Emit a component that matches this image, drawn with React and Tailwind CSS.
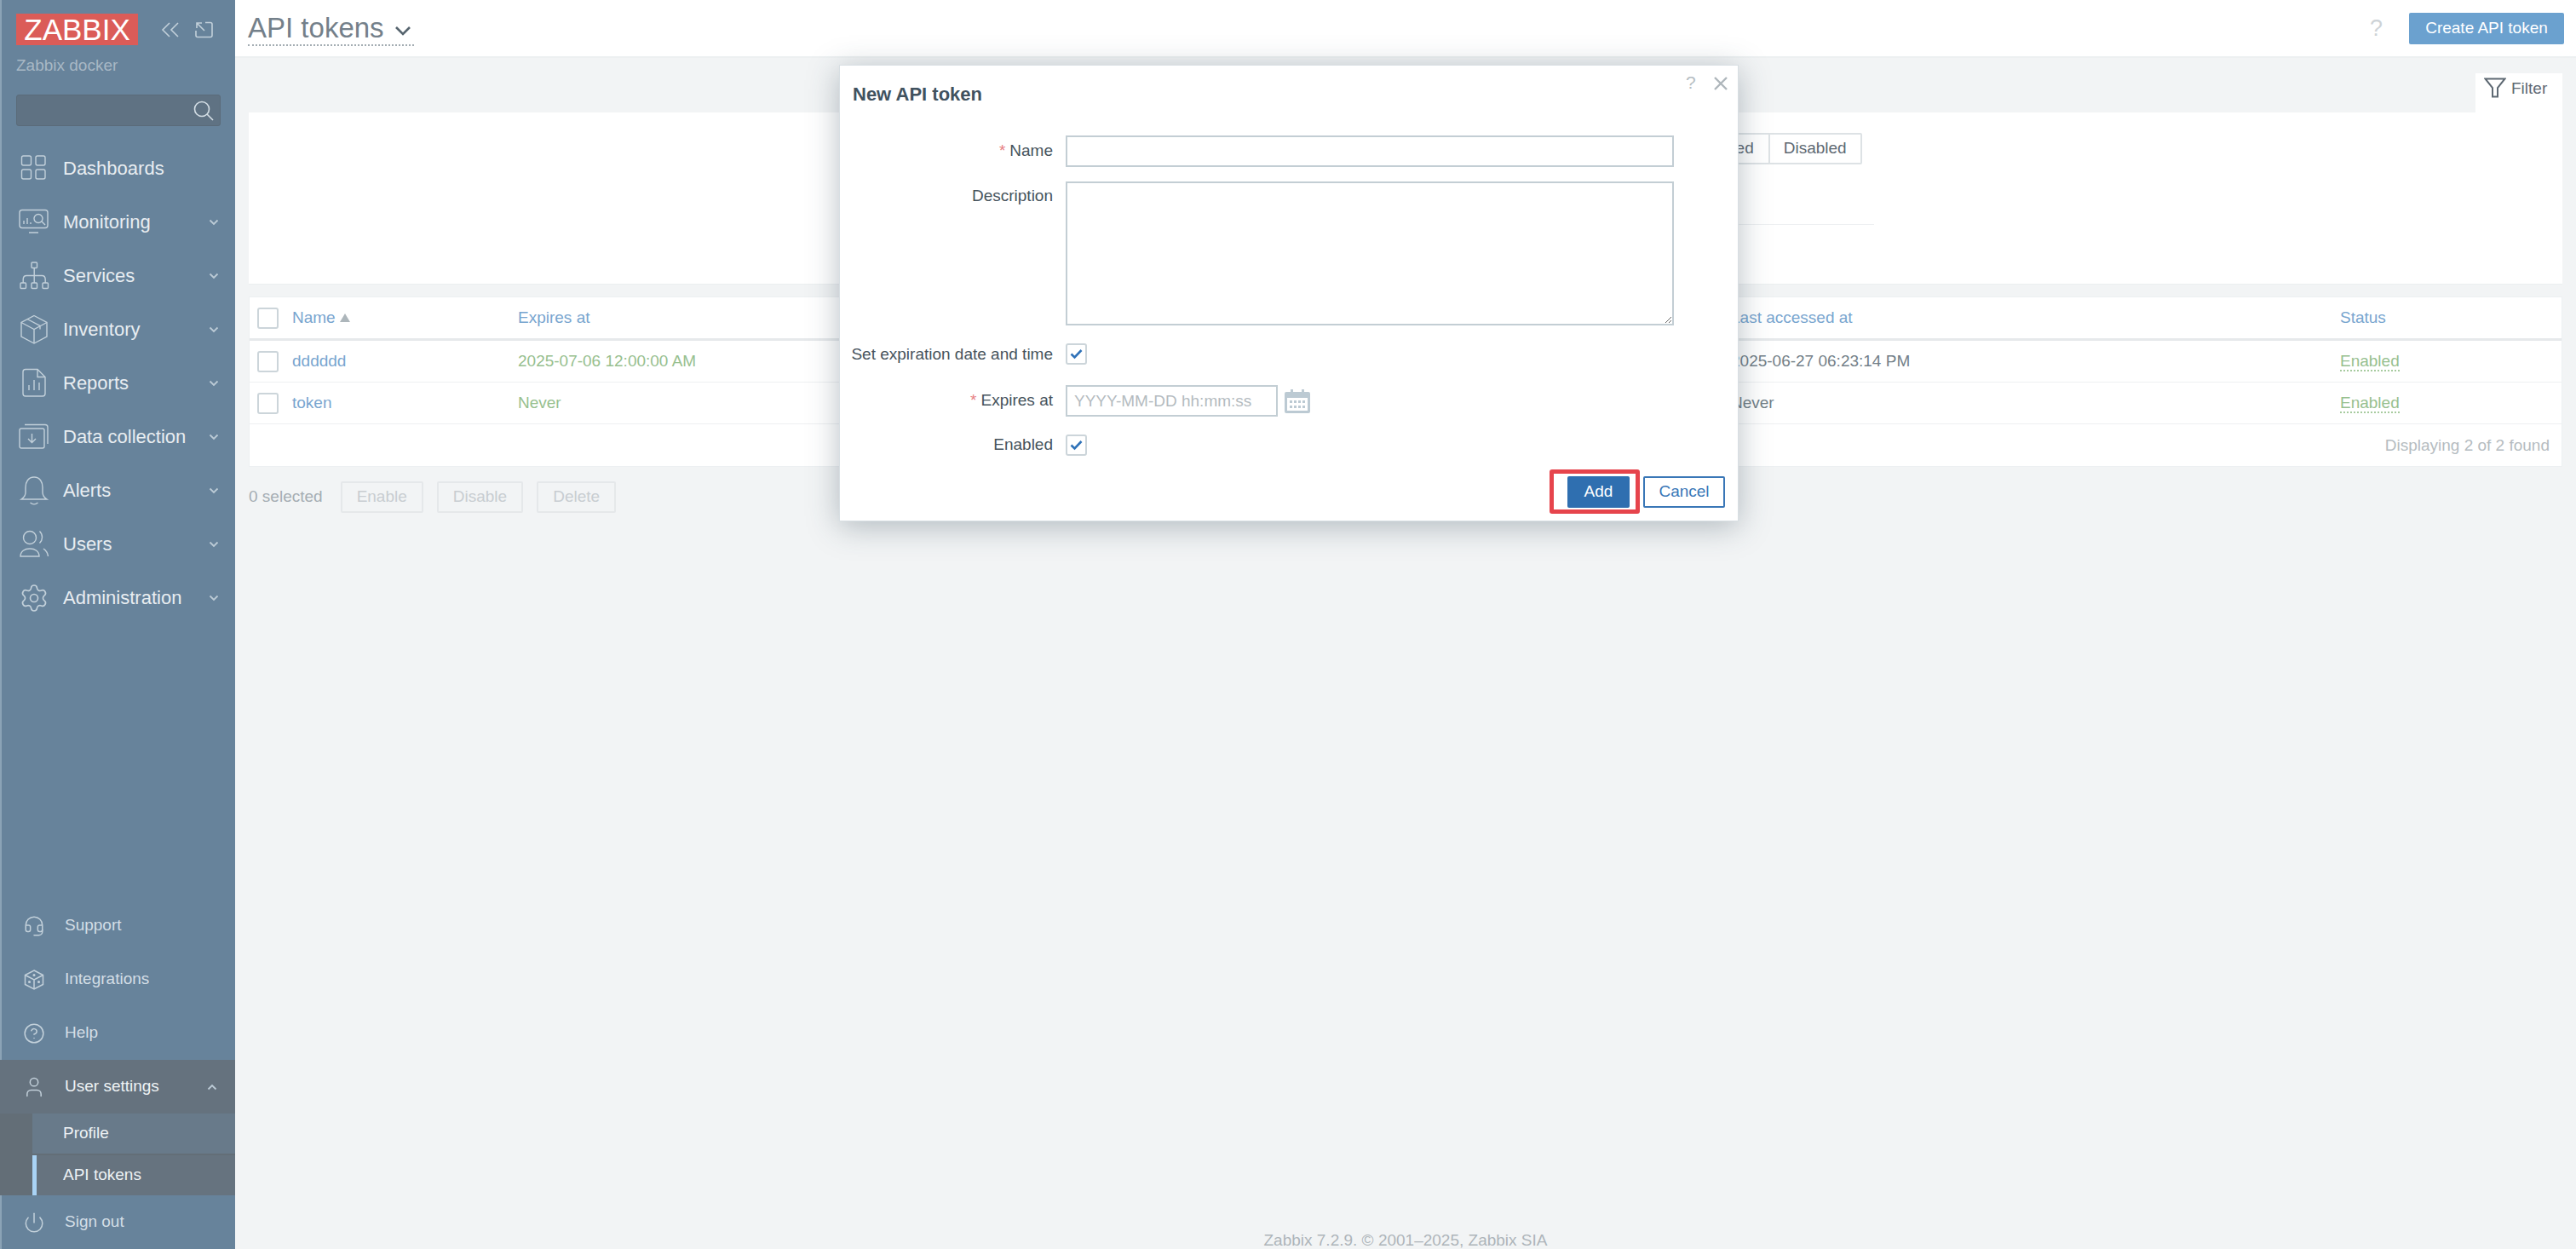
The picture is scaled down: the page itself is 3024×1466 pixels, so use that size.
import { Settings, Headset, CircleHelp, User, Power } from 'lucide-react'

const Chevron = ({ up }) => (
    <svg width="12" height="8" viewBox="0 0 12 8" fill="none" stroke="#bccbd6" strokeWidth="1.8" className="absolute left-[243px]">
        <path d={up ? 'M1.5 6.5 6 2l4.5 4.5' : 'M1.5 1.5 6 6l4.5-4.5'} />
    </svg>
)

const iconProps = { width: 36, height: 36, viewBox: '0 0 36 36', fill: 'none', stroke: '#c2d0da', strokeWidth: 1.4 }

const IconDashboards = () => (
    <svg {...iconProps}>
        <rect x="3.5" y="3" width="11" height="11" rx="2" />
        <rect x="20" y="3" width="11" height="11" rx="2" />
        <rect x="3.5" y="19" width="11" height="11" rx="2" />
        <rect x="20" y="19" width="11" height="11" rx="2" />
    </svg>
)

const IconMonitoring = () => (
    <svg {...iconProps}>
        <rect x="1" y="3.5" width="33" height="21" rx="3" />
        <path d="M12 30h11M6 20v-4M10 20v-7M14 20v-2" />
        <circle cx="23" cy="13.5" r="5" />
        <path d="m27 17 4 4" />
    </svg>
)

const IconServices = () => (
    <svg {...iconProps}>
        <rect x="15" y="2" width="6.5" height="6.5" rx="1" />
        <rect x="2" y="26" width="6.5" height="6.5" rx="1" />
        <rect x="15" y="26" width="6.5" height="6.5" rx="1" />
        <rect x="28" y="26" width="6.5" height="6.5" rx="1" />
        <path d="M18.2 8.5V26M5.2 26v-4c0-3 2-4.500 4-4.500h18c2 0 4 1.500 4 4.500v4" />
    </svg>
)

const IconInventory = () => (
    <svg {...iconProps}>
        <path d="M18 1.500 33 9.500V26L18 34 3 26V9.500z" />
        <path d="M3 9.500 18 17.500 33 9.500M18 17.500V34M10 5.500l15 8v4" />
    </svg>
)

const IconReports = () => (
    <svg {...iconProps}>
        <path d="M8 1.500h14l9 9V30a3 3 0 0 1-3 3H8a3 3 0 0 1-3-3V4.500a3 3 0 0 1 3-3z" />
        <path d="M22 1.500v9h9M12 26v-6M18 26V14M24 26v-9" />
    </svg>
)

const IconData = () => (
    <svg {...iconProps}>
        <rect x="1" y="8" width="29" height="23" rx="2" />
        <path d="M7 3.500h24a3 3 0 0 1 3 3V26M15.500 14v10M11 20l4.500 4.500L20 20" />
    </svg>
)

const IconAlerts = () => (
    <svg {...iconProps}>
        <path d="M18 2C11 2 8 8 8 14v6c0 4-2 6-5 8h30c-3-2-5-4-5-8v-6c0-6-3-12-10-12z" />
        <path d="M13.500 32c3 2.500 6 2.500 9 0" />
    </svg>
)

const IconUsers = () => (
    <svg {...iconProps}>
        <circle cx="13" cy="10" r="7.500" />
        <path d="M2 32c0-6 5-9 11-9s11 3 11 9zM24.500 2.500c2 2 3 4.500 3 7s-1 5-3 7M29 23c3 2 5 5 5.500 9" />
    </svg>
)

const IconIntegrations = () => (
    <svg width="26" height="26" viewBox="0 0 26 26" fill="none" stroke="#c2d0da" strokeWidth="1.500">
        <path d="M13 2 23.500 7.500v11L13 24 2.500 18.500v-11z" />
        <path d="M2.500 7.500 13 13l10.500-5.500M13 13v11" />
        <circle cx="13" cy="7.500" r="0.800" />
        <circle cx="7.500" cy="15.500" r="0.800" />
        <circle cx="18.500" cy="15.500" r="0.800" />
    </svg>
)

const topNav = [
    { label: 'Dashboards', icon: IconDashboards },
    { label: 'Monitoring', icon: IconMonitoring, more: true },
    { label: 'Services', icon: IconServices, more: true },
    { label: 'Inventory', icon: IconInventory, more: true },
    { label: 'Reports', icon: IconReports, more: true },
    { label: 'Data collection', icon: IconData, more: true },
    { label: 'Alerts', icon: IconAlerts, more: true },
    { label: 'Users', icon: IconUsers, more: true },
    { label: 'Administration', icon: () => <Settings size={36} stroke="#c2d0da" strokeWidth={1.1} />, more: true },
]

const SmallRow = ({ icon, label }) => (
    <div className="flex h-[63px] items-center text-[19px] text-[#d3dee6]">
        <div className="flex w-[74px] justify-center pl-[2px]">{icon}</div>
        {label}
    </div>
)

const Checkbox = ({ checked }) => (
    <span className="flex h-[25px] w-[25px] items-center justify-center rounded-[3px] border-2 border-[#ccd5da] bg-white">
        {checked && (
            <svg width="15" height="13" viewBox="0 0 15 13" fill="none" stroke="#2f72b8" strokeWidth="2.600">
                <path d="M1.500 6.500 5.500 10.500 13.500 2" />
            </svg>
        )}
    </span>
)

const Sidebar = () => (
    <aside className="flex h-full w-[276px] shrink-0 flex-col border-l-2 border-[#8ba3b6] bg-[#67839b]">
        <div className="flex h-[53px] items-end pl-[17px]">
            <div className="flex h-[37px] w-[143px] items-center justify-center bg-[#db5c58] text-[35px] leading-none text-white">ZABBIX</div>
            <svg width="22" height="18" viewBox="0 0 22 18" fill="none" stroke="#c2d0da" strokeWidth="1.600" className="mb-[9px] ml-[27px]">
                <path d="M10 1 2 9l8 8M20 1l-8 8 8 8" />
            </svg>
            <svg width="21" height="20" viewBox="0 0 21 20" fill="none" stroke="#c2d0da" strokeWidth="1.600" className="mb-[8px] ml-[18px]">
                <path d="M12 1.500h6a2 2 0 0 1 2 2v13a2 2 0 0 1-2 2H3a2 2 0 0 1-2-2V11M2 2l9 9M2 8V2h6" />
            </svg>
        </div>
        <div className="mt-[13px] pl-[17px] text-[19px] leading-[22px] text-[#a8b8c5]">Zabbix docker</div>
        <div className="mx-[17px] mt-[23px] flex h-[37px] items-center justify-end rounded-[3px] border border-[#5a6b79] bg-[#5f7283] pr-[6px]">
            <svg width="26" height="26" viewBox="0 0 26 26" fill="none" stroke="#d5dfe6" strokeWidth="1.600">
                <circle cx="11" cy="11" r="8.500" />
                <path d="m17 17 7 7" />
            </svg>
        </div>
        <nav className="mt-[18px]">
            {topNav.map(({ label, icon: Icon, more }) => (
                <div key={label} className="relative flex h-[63px] items-center text-[22px] text-[#e8edf1]">
                    <div className="flex w-[72px] justify-center pl-[4px]"><Icon /></div>
                    {label}
                    {more && <Chevron />}
                </div>
            ))}
        </nav>
        <div className="mt-auto">
            <SmallRow icon={<Headset size={26} stroke="#c2d0da" strokeWidth={1.4} />} label="Support" />
            <SmallRow icon={<IconIntegrations />} label="Integrations" />
            <SmallRow icon={<CircleHelp size={26} stroke="#c2d0da" strokeWidth={1.4} />} label="Help" />
            <div className="relative -ml-[2px] flex h-[63px] items-center bg-[#65727e] pl-[2px] text-[19px] text-[#eef2f5]">
                <div className="flex w-[74px] justify-center pl-[2px]"><User size={28} stroke="#c2d0da" strokeWidth={1.300} /></div>
                User settings
                <Chevron up />
            </div>
            <div className="-ml-[2px] bg-[#636e77] pl-[38px] text-[19px] text-[#eef2f5]">
                <div className="flex h-[47px] items-center bg-[#687a8a] pl-[36px]">Profile</div>
                <div className="mt-[2px] flex h-[47px] items-center border-l-[5px] border-[#a9d3f5] bg-[#66737f] pl-[31px]">API tokens</div>
            </div>
            <SmallRow icon={<Power size={26} stroke="#c2d0da" strokeWidth={1.4} />} label="Sign out" />
        </div>
    </aside>
)

const Row = ({ name, expires, accessed }) => (
    <div className="grid h-[49px] grid-cols-[50px_265px_1424px_715px_1fr] items-center border-b border-[#eef0f2]">
        <div className="pl-[9px]"><Checkbox /></div>
        <div className="text-[#78a5cf]">{name}</div>
        <div className="text-[#97c08f]">{expires}</div>
        <div className="text-[#737f88]">{accessed}</div>
        <div><span className="border-b-2 border-dotted border-[#a7cb9f] text-[#97c08f]">Enabled</span></div>
    </div>
)

const Dialog = () => (
    <div className="absolute left-[985px] top-[76px] h-[536px] w-[1056px] border border-[#d8dfe3] bg-white shadow-[0_6px_34px_rgba(50,70,85,0.34)]">
        <div className="pl-[15px] pt-[21px] text-[22px] font-bold leading-[26px] text-[#41525f]">New API token</div>
        <div className="absolute left-[993px] top-[4px] text-[21px] text-[#b6bec3]">?</div>
        <svg width="18" height="18" viewBox="0 0 18 18" fill="none" stroke="#aeb6bb" strokeWidth="2.400" className="absolute left-[1025px] top-[12px]">
            <path d="m2 2 14 14M16 2 2 16" />
        </svg>
        <div className="mt-[35px] grid grid-cols-[250px_1fr] gap-x-[15px] pr-[75px] text-[19px] text-[#46535c]">
            <div className="flex h-[37px] items-center justify-end"><span className="mr-[5px] text-[#e77f83]">*</span>Name</div>
            <input className="h-[37px] w-full border-2 border-[#c3ced4] bg-white outline-none" />
            <div className="pt-[23px] text-right leading-[22px]">Description</div>
            <div className="pt-[17px]">
                <textarea className="block h-[169px] w-full resize border-2 border-[#c3ced4] bg-white outline-none" />
            </div>
            <div className="flex h-[46px] items-end justify-end leading-[25px]">Set expiration date and time</div>
            <div className="flex h-[46px] items-end"><Checkbox checked /></div>
            <div className="mt-[24px] flex h-[37px] items-center justify-end"><span className="mr-[5px] text-[#e77f83]">*</span>Expires at</div>
            <div className="mt-[24px] flex h-[37px] items-center">
                <input placeholder="YYYY-MM-DD hh:mm:ss" className="h-[37px] w-[249px] border-2 border-[#c3ced4] bg-white pl-[8px] text-[19px] outline-none placeholder:text-[#b4bbc0]" />
                <svg width="30" height="30" viewBox="0 0 30 30" className="ml-[8px]" fill="#bccad3">
                    <path d="M7 1h3v3h10V1h3v3h5a2 2 0 0 1 2 2v21a2 2 0 0 1-2 2H2a2 2 0 0 1-2-2V6a2 2 0 0 1 2-2h5zM3 11v15h24V11z" />
                    <path d="M6 14h3v3H6zM11 14h3v3h-3zM16 14h3v3h-3zM21 14h3v3h-3zM6 20h3v3H6zM11 20h3v3h-3zM16 20h3v3h-3zM21 20h3v3h-3z" />
                </svg>
            </div>
            <div className="mt-[21px] flex h-[25px] items-center justify-end">Enabled</div>
            <div className="mt-[21px] h-[25px]"><Checkbox checked /></div>
        </div>
        <div className="mt-[24px] flex justify-end gap-[16px] pr-[15px] text-[19px]">
            <button className="h-[37px] w-[73px] rounded-[2px] bg-[#2f6fb0] text-white">Add</button>
            <button className="h-[37px] w-[96px] rounded-[2px] border-2 border-[#3a77b7] bg-white text-[#3a77b7]">Cancel</button>
        </div>
        {/* red annotation box from the screenshot */}
        <div className="absolute left-[833px] top-[474px] h-[52px] w-[106px] rounded-[3px] border-[5px] border-[#e6444c]" />
    </div>
)

const App = () => (
    <div className="relative flex h-screen w-full overflow-hidden bg-[#f2f4f5] font-['Liberation_Sans',Arial,sans-serif] text-[19px]">
        <Sidebar />
        <main className="flex min-w-0 flex-1 flex-col">
            <header className="flex h-[68px] shrink-0 items-center border-b-2 border-[#edf0f1] bg-white pl-[15px] pr-[14px]">
                <div className="flex h-[42px] items-center gap-[12px] border-b-2 border-dotted border-[#a4adb3] pr-[3px] text-[33px] leading-none text-[#74808a]">
                    API tokens
                    <svg width="20" height="13" viewBox="0 0 20 13" fill="none" stroke="#56646e" strokeWidth="2.600" className="mt-[8px]">
                        <path d="m2 2 8 8 8-8" />
                    </svg>
                </div>
                <div className="ml-auto mr-[31px] text-[27px] text-[#ced3d7]">?</div>
                <button className="h-[37px] w-[182px] rounded-[2px] bg-[#6ba1cf] text-[19px] text-white">Create API token</button>
            </header>

            <div className="mr-[16px] ml-[16px] mt-[18px] flex justify-end">
                <div className="flex h-[46px] w-[102px] items-start gap-[6px] bg-white pl-[10px] pt-[5px] text-[#5e6973]">
                    <svg width="26" height="24" viewBox="0 0 26 24" fill="none" stroke="#5e6973" strokeWidth="2" className="shrink-0">
                        <path d="M1.500 1.500h23L16 12v10.500h-6V12z" />
                    </svg>
                    <span className="leading-[26px]">Filter</span>
                </div>
            </div>
            <section className="mx-[16px] h-[202px] border-b border-[#ebeef0] bg-white pt-[24px]">
                <div className="ml-[1678px] flex h-[37px] w-fit rounded-[2px] border-2 border-[#dde2e5] text-[#5e6973]">
                    <div className="flex items-center border-r-2 border-[#dde2e5] px-[17px]">Enabled</div>
                    <div className="flex items-center px-[16px]">Disabled</div>
                </div>
                <div className="ml-[1678px] mt-[70px] h-px w-[230px] bg-[#eef0f2]" />
            </section>

            <section className="mx-[16px] mt-[14px] h-[200px] border border-[#edf0f2] bg-white">
                <div className="grid h-[51px] grid-cols-[50px_265px_1424px_715px_1fr] items-center border-b-[3px] border-[#e6e9eb] text-[#78a5cf]">
                    <div className="pl-[9px]"><Checkbox /></div>
                    <div className="flex items-center gap-[5px]">
                        Name
                        <svg width="12" height="10" viewBox="0 0 12 10" fill="#adb6bb"><path d="M6 0l6 10H0z" /></svg>
                    </div>
                    <div>Expires at</div>
                    <div>Last accessed at</div>
                    <div>Status</div>
                </div>
                <Row name="dddddd" expires="2025-07-06 12:00:00 AM" accessed="2025-06-27 06:23:14 PM" />
                <Row name="token" expires="Never" accessed="Never" />
                <div className="flex h-[50px] items-center justify-end pr-[14px] text-[#b5bcc1]">Displaying 2 of 2 found</div>
            </section>

            <div className="ml-[16px] mt-[17px] flex items-center gap-[16px] text-[#a5adb3]">
                <span className="mr-[5px]">0 selected</span>
                {['Enable', 'Disable', 'Delete'].map((b) => (
                    <button key={b} className="h-[37px] rounded-[2px] border-2 border-[#e5e8ea] px-[17px] text-[#c8cdd1]">{b}</button>
                ))}
            </div>

            <footer className="mt-auto flex h-[20px] items-center justify-center text-[#aeb5ba]">Zabbix 7.2.9. © 2001–2025, Zabbix SIA</footer>
        </main>
        <Dialog />
    </div>
)

export default App
